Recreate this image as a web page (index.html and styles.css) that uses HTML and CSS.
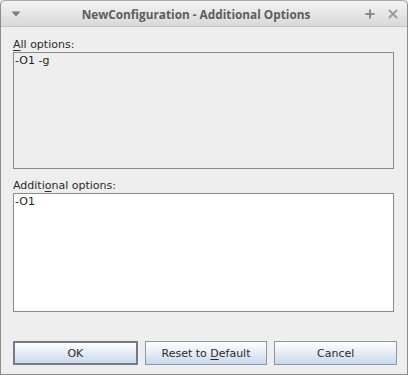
FILE: index.html
```html
<!DOCTYPE html>
<html>
<head>
<meta charset="utf-8">
<link rel="stylesheet" href="styles.css">
</head>
<body>
<div class="window">
  <div class="titlebar">
    <svg class="tb-menu" width="10" height="6" viewBox="0 0 10 6"><path d="M0.5 0.5 L9.5 0.5 L5 5.5 Z" fill="#7a7a7a"/></svg>
    <div class="title">NewConfiguration - Additional Options</div>
    <svg class="tb-max" width="10" height="10" viewBox="0 0 10 10"><path d="M5 0.5 V9.5 M0.5 5 H9.5" stroke="#8a8a8a" stroke-width="2"/></svg>
    <svg class="tb-close" width="10" height="10" viewBox="0 0 10 10"><path d="M1 1 L9 9 M9 1 L1 9" stroke="#9a9a9a" stroke-width="1.8"/></svg>
  </div>
  <div class="content">
    <div class="label label-first"><u>A</u>ll options:</div>
    <div class="box box-disabled">-O1 -g</div>
    <div class="label label-second">Additi<u>o</u>nal options:</div>
    <div class="box box-edit">-O1</div>
    <div class="buttons">
      <div class="btn btn-default"><span>OK</span></div>
      <div class="btn"><span>Reset to <u>D</u>efault</span></div>
      <div class="btn"><span>Cancel</span></div>
    </div>
  </div>
</div>
</body>
</html>
```
FILE: styles.css
```css
html, body {
  margin: 0;
  padding: 0;
  background: #eeeeee;
}
.window {
  width: 408px;
  height: 375px;
  box-sizing: border-box;
  border: 1px solid #8c8c8c;
  border-top: none;
  border-radius: 5px 5px 0 0;
  background: #eeeeee;
  display: flex;
  flex-direction: column;
  font-family: "DejaVu Sans", sans-serif;
  overflow: hidden;
}
.titlebar {
  height: 27px;
  box-sizing: border-box;
  border-top: 1px solid #a8a8a8;
  border-bottom: 1px solid #c4c4c4;
  border-radius: 5px 5px 0 0;
  background: linear-gradient(#f4f4f4, #d8d8d8);
  display: flex;
  align-items: center;
  padding: 0 9px 0 10px;
}
.tb-menu {
  margin-top: 1px;
}
.title {
  flex: 1;
  text-align: center;
  font-family: "Open Sans", "DejaVu Sans", sans-serif;
  font-weight: bold;
  font-size: 11.8px;
  color: #5d5d5d;
  padding-left: 6px;
}
.tb-max {
  margin-right: 13px;
}
.content {
  flex: 1;
  display: flex;
  flex-direction: column;
  padding: 0 13px 0 12px;
}
.label {
  font-size: 11px;
  color: #2a2a2a;
  height: 15px;
  line-height: 15px;
}
.label u {
  text-decoration-thickness: 1px;
  text-underline-offset: 2px;
}
.label-first {
  margin-top: 10px;
}
.label-second {
  margin-top: 9px;
}
.box {
  box-sizing: border-box;
  border: 1px solid #8a8a8a;
  font-size: 11px;
  color: #1e1e1e;
  padding: 1px 1px;
  line-height: 14px;
}
.box-disabled {
  height: 117px;
  background: #eeeeee;
}
.box-edit {
  height: 119px;
  background: #ffffff;
}
.buttons {
  margin-top: 29px;
  margin-right: -3px;
  display: flex;
  gap: 7px;
}
.btn {
  flex: 1;
  height: 24px;
  box-sizing: border-box;
  border: 1px solid #8c97a4;
  background: linear-gradient(#ffffff, #c9d9ec);
  font-size: 11px;
  color: #2a2a2a;
  display: flex;
  align-items: center;
  justify-content: center;
}
.btn u {
  text-underline-offset: 2px;
}
.btn-default {
  border: 2px solid #737b86;
}
```
